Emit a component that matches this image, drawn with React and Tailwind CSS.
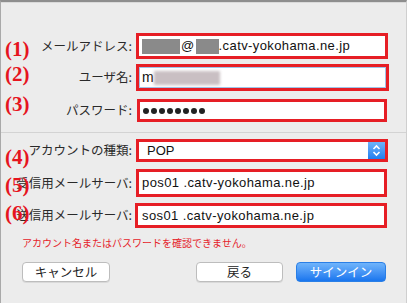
import React from 'react';

const jp = "font-['Noto_Sans_CJK_JP','Noto_Sans',sans-serif]";
const mono = "font-['Liberation_Sans','Noto_Sans_CJK_JP',sans-serif]";

function Num({ n, top }) {
  return (
    <span
      className="absolute left-[4px] z-10 font-['Liberation_Serif',serif] font-bold text-[21px] leading-none text-[#e6141e]"
      style={{ top }}
    >
      ({n})
    </span>
  );
}

function Row({ n, numTop, label, h, mt, w = 252, shift = 0, children }) {
  return (
    <div className="relative flex items-center" style={{ height: h, marginTop: mt }}>
      <Num n={n} top={numTop} />
      <div className={`w-[135px] shrink-0 text-right pr-[4px] text-[12.5px] text-[#2a2a2a] ${jp}`}>{label}</div>
      <div
        className="h-full border-[3px] border-[#e61e25] bg-white flex items-center"
        style={{ width: w, marginLeft: shift }}
      >
        {children}
      </div>
    </div>
  );
}

export default function App() {
  return (
    <div className="w-[407px] h-[303px] bg-[#ececec] border-t-2 border-t-[#8e8e8e] border-l border-l-[#a9a9a9] border-r border-r-[#cfcfcf] relative overflow-hidden">
      <div className="h-px bg-[#dadada]" />
      <div className="pt-[30px]">
        <Row n={1} numTop={6} label="メールアドレス:" h={26} mt={0}>
          <div className={`flex items-center pl-[3px] text-[13px] tracking-[0.4px] text-[#111] ${mono}`}>
            <span className="w-[38px] h-[15px] bg-[#8a8a8a]" />
            <span className="px-px">@</span>
            <span className="w-[23px] h-[15px] bg-[#8a8a8a]" />
            <span>.catv-yokohama.ne.jp</span>
          </div>
        </Row>
        <Row n={2} numTop={0} label="ユーザ名:" h={27} mt={5} w={253}>
          <div className="w-full h-full border border-[#9fc4e8] flex items-center pl-[2px]">
            <span className={`text-[14px] text-[#111] ${mono}`}>m</span>
            <span className="w-[66px] h-[14px] bg-[#c9bfc3] blur-[1.5px]" />
          </div>
        </Row>
        <Row n={3} numTop={-5} label="パスワード:" h={23} mt={8} w={250} shift={1}>
          <div className="flex items-center gap-[2px] pl-[3px]">
            {Array.from({ length: 8 }).map((_, i) => (
              <span key={i} className="w-[6px] h-[6px] rounded-full bg-[#222]" />
            ))}
          </div>
        </Row>

        <div className="mt-[10px] h-px bg-[#d3d3d3]" />

        <Row n={4} numTop={8} label="アカウントの種類:" h={23} mt={6}>
          <div className="flex items-center justify-between w-full h-full">
            <span className={`pl-[8px] text-[13px] text-[#111] ${mono}`}>POP</span>
            <span className="w-[17px] h-full bg-gradient-to-b from-[#6db3f8] to-[#1e7ef0] flex items-center justify-center">
              <svg width="9" height="13" viewBox="0 0 9 13" fill="none" stroke="white" strokeWidth="1.6">
                <path d="M1.5 5 L4.5 2 L7.5 5" />
                <path d="M1.5 8 L4.5 11 L7.5 8" />
              </svg>
            </span>
          </div>
        </Row>
        <Row n={5} numTop={6} label="受信用メールサーバ:" h={28} mt={7} w={251}>
          <span className={`pl-[3px] text-[13px] tracking-[0.4px] text-[#111] ${mono}`}>pos01 .catv-yokohama.ne.jp</span>
        </Row>
        <Row n={6} numTop={0} label="送信用メールサーバ:" h={25} mt={6} w={252} shift={-1}>
          <span className={`pl-[4px] text-[13px] tracking-[0.4px] text-[#111] ${mono}`}>sos01 .catv-yokohama.ne.jp</span>
        </Row>

        <p className={`mt-[8px] pl-[21px] text-[10px] leading-[14px] text-[#e5232a] ${jp}`}>
          アカウント名またはパスワードを確認できません。
        </p>

        <div className={`mt-[12px] flex items-center text-[12.5px] ${jp}`}>
          <button className="ml-[21px] w-[88px] h-[20px] rounded-[4px] bg-white border border-[#bdbdbd] text-[#222] leading-none shadow-[0_1px_0_rgba(0,0,0,0.08)]">
            キャンセル
          </button>
          <button className="ml-[86px] w-[87px] h-[20px] rounded-[4px] bg-white border border-[#bdbdbd] text-[#222] leading-none shadow-[0_1px_0_rgba(0,0,0,0.08)]">
            戻る
          </button>
          <button className="ml-[13px] w-[90px] h-[20px] rounded-[4px] bg-gradient-to-b from-[#6fb4fb] to-[#1775ee] border border-[#2a7fe6] text-white leading-none">
            サインイン
          </button>
        </div>
      </div>
    </div>
  );
}
